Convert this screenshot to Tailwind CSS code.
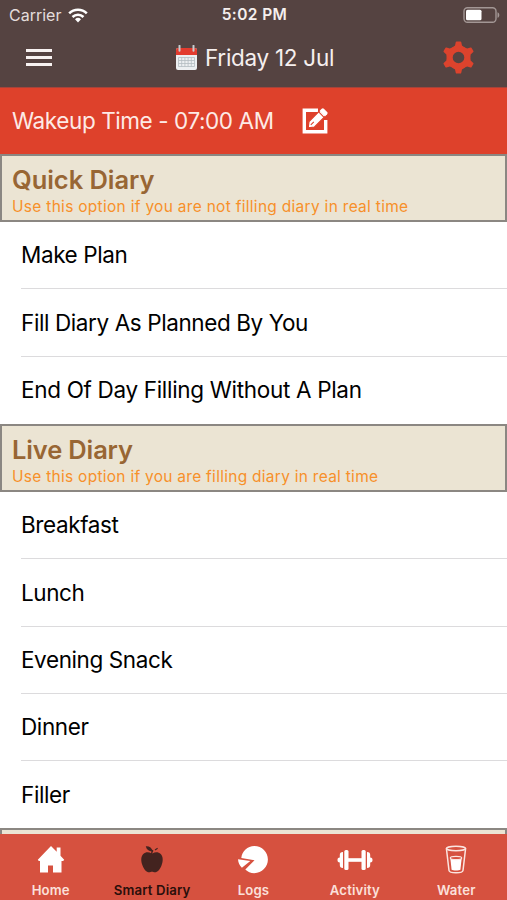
<!DOCTYPE html>
<html lang="en">
<head>
    <meta charset="UTF-8">
    <meta name="viewport" content="width=device-width, initial-scale=1.0">
    <title>Smart Diary</title>
    <script src="https://cdn.jsdelivr.net/npm/@tailwindcss/browser@4"></script>
</head>
<body class="bg-white font-[Inter,sans-serif] text-black">
    <div class="w-[507px] h-[900px] overflow-hidden flex flex-col relative">

        <!-- Header -->
        <header class="h-[88px] shrink-0 bg-[#554341] text-[#f5efee] border-b border-[#a5433a]">
            <div class="h-[30px] grid grid-cols-3 items-center pl-[9px] pr-[7px]">
                <div class="flex items-center gap-[7px]">
                    <span class="text-[16px] text-[#e4dddc]">Carrier</span>
                    <svg class="w-5 h-[15px]" viewBox="0 0 20 15" fill="none" stroke="#fff" stroke-width="2.6">
                        <path d="M1.2 5.4a12.6 12.6 0 0 1 17.6 0"/>
                        <path d="M4.5 9a7.9 7.9 0 0 1 11 0"/>
                        <path d="M10 14.4l-3-3.1a4.3 4.3 0 0 1 6 0z" fill="#fff" stroke="none"/>
                    </svg>
                </div>
                <span class="text-center text-[15.5px] font-semibold tracking-[0.4px]">5:02 PM</span>
                <svg class="justify-self-end w-[37px] h-4" viewBox="0 0 37 16">
                    <rect x="1" y=".7" width="32" height="14.6" rx="3.5" fill="none" stroke="#a39795" stroke-width="1.4"/>
                    <rect x="3" y="2.7" width="15.5" height="10.6" rx="1.5" fill="#fff"/>
                    <path d="M34.5 5.2c2.4.8 2.4 4.8 0 5.6z" fill="#a39795"/>
                </svg>
            </div>
            <div class="h-[55px] flex items-center pl-[26px] pr-[32px]">
                <div class="w-[26px] flex flex-col gap-[4px]">
                    <span class="h-[3px] bg-[#f8f2f1]"></span>
                    <span class="h-[3px] bg-[#f8f2f1]"></span>
                    <span class="h-[3px] bg-[#f8f2f1]"></span>
                </div>
                <div class="flex items-center gap-[7px] ml-[123px]">
                    <svg class="w-[23px] h-[26px]" viewBox="0 0 23 26">
                        <rect x="1" y="3" width="21" height="22" rx="2" fill="#eceff1"/>
                        <path d="M1 10V5a2 2 0 0 1 2-2h17a2 2 0 0 1 2 2v5z" fill="#e23b2e"/>
                        <path d="M4.500 .8v5M18.500 .8v5" stroke="#c9cdd0" stroke-width="2" stroke-linecap="round"/>
                        <path d="M3.500 12.500h16M3.500 15.500h16M3.500 18.500h16M3.500 21.500h16M3.500 12.500v9M6.700 12.500v9M9.900 12.500v9M13.100 12.500v9M16.300 12.500v9M19.500 12.500v9" stroke="#b4bcc1" stroke-width=".8"/>
                    </svg>
                    <span class="text-[22.5px] tracking-[-0.28px]">Friday 12 Jul</span>
                </div>
                <svg class="w-[33px] h-[33px] ml-auto" viewBox="0 0 33 33" fill="#dc432d">
                    <circle cx="16.5" cy="16.5" r="8.9" fill="none" stroke="#dc432d" stroke-width="6.2"/>
                    <path id="tooth" d="M10.500 7l2.500-2.500.8-3.500q.2-.6.800-.6h3.800q.6 0 .8.600l.8 3.500L22.500 7z"/>
                    <use href="#tooth" transform="rotate(60 16.5 16.5)"/>
                    <use href="#tooth" transform="rotate(120 16.5 16.5)"/>
                    <use href="#tooth" transform="rotate(180 16.5 16.5)"/>
                    <use href="#tooth" transform="rotate(240 16.5 16.5)"/>
                    <use href="#tooth" transform="rotate(300 16.5 16.5)"/>
                </svg>
            </div>
        </header>

        <!-- Wakeup time -->
        <div class="h-[66px] shrink-0 bg-[#de412b] text-[#fdeae6] flex items-center gap-[29px] pl-3">
            <span class="text-[22.5px] tracking-[-0.41px]">Wakeup Time - 07:00 AM</span>
            <svg class="w-[26px] h-[26px] -ml-px" viewBox="0 0 26 26">
                <path d="M16 2.300H2.300v21.400h21.400V12" fill="none" stroke="#fff" stroke-width="3.400"/>
                <path d="M6.200 19.800l.8-6.300L18.300 2.200l5.500 5.500L12.500 19z" fill="#fff" stroke="#de412b" stroke-width="1.200"/>
                <path d="M17.700 2.800l2-2q1.100-1 2.200 0l3.200 3.200q1 1.100 0 2.200l-2 2z" fill="#fff"/>
                <path d="M8.800 16.800l3-3M16.700 3.900l5.400 5.400" stroke="#de412b" stroke-width="1.100"/>
            </svg>
        </div>

        <!-- Quick diary -->
        <div class="h-[68px] shrink-0 bg-[#ebe4d3] border-2 border-[#8b8782] pl-[10px] pt-[8px]">
            <h2 class="text-[25.5px] leading-[32px] font-semibold tracking-[-0.05px] text-[#986634]">Quick Diary</h2>
            <p class="text-[15.5px] leading-[19px] tracking-[0.29px] pt-px text-[#f7902a]">Use this option if you are not filling diary in real time</p>
        </div>
        <ul class="shrink-0 text-[22.5px] tracking-[-0.4px] pl-[21px]">
            <li class="h-[67.4px] flex items-center border-b border-[#dcdbdd]">Make Plan</li>
            <li class="h-[67.4px] flex items-center border-b border-[#dcdbdd]">Fill Diary As Planned By You</li>
            <li class="h-[67.2px] flex items-center pb-px tracking-[-0.32px]">End Of Day Filling Without A Plan</li>
        </ul>

        <!-- Live diary -->
        <div class="h-[68px] shrink-0 bg-[#ebe4d3] border-2 border-[#8b8782] pl-[10px] pt-[8px]">
            <h2 class="text-[25.5px] leading-[32px] font-semibold tracking-[-0.15px] text-[#986634]">Live Diary</h2>
            <p class="text-[15.5px] leading-[19px] tracking-[0.27px] pt-px text-[#f7902a]">Use this option if you are filling diary in real time</p>
        </div>
        <ul class="shrink-0 text-[22.5px] tracking-[-0.4px] pl-[21px]">
            <li class="h-[67.3px] flex items-center border-b border-[#dcdbdd]">Breakfast</li>
            <li class="h-[67.3px] flex items-center border-b border-[#dcdbdd]">Lunch</li>
            <li class="h-[67.3px] flex items-center border-b border-[#dcdbdd]">Evening Snack</li>
            <li class="h-[67.3px] flex items-center border-b border-[#dcdbdd]">Dinner</li>
            <li class="h-[67.2px] flex items-center">Filler</li>
        </ul>
        <div class="h-[68px] shrink-0 bg-[#ebe4d3] border-2 border-[#8b8782]"></div>

        <!-- Tab bar -->
        <nav class="absolute bottom-0 inset-x-0 h-[66px] bg-[#d6513f] grid grid-cols-5 text-[13.2px] font-semibold tracking-[0.15px] text-[#fbe0da]">
            <a class="flex flex-col items-center pt-[11px]">
                <svg class="w-[28px] h-[29px]" viewBox="0 0 28 29" fill="#fff">
                    <path d="M14 1L.8 14.800l1 1.200h1.200v11.500h8v-7h5v7h8.500V16h1.700l1-1.200-3.700-4V2.500h-3.800v4.300z"/>
                </svg>
                <span class="mt-[8px] leading-[17px]">Home</span>
            </a>
            <a class="flex flex-col items-center pt-[11px] text-[#2a0f0b]">
                <svg class="w-[24px] h-[29px]" viewBox="0 0 24 29" fill="#43231f">
                    <path d="M12.500 8.500c2.500-1.700 6-1.600 8.200.5 2.500 2.500 2.600 7 .8 11.500-1.600 4-4 6.800-6.600 6.800-1.300 0-1.700-.5-2.900-.5s-1.600.5-2.900.500c-2.600 0-5-2.800-6.600-6.800C.7 16 .8 11.500 3.300 9c2.200-2.100 5.700-2.200 8.200-.5z"/>
                    <path d="M11.600 9c.1-1.600.5-2.700 1.300-3.700" fill="none" stroke="#43231f" stroke-width="1.400"/>
                    <path d="M5.800 1.300c3.400-.3 6.300 1.700 6.900 5.100-3.500.3-6.200-1.600-6.900-5.100z"/>
                    <path d="M15 4.900l2.600-1.600" stroke="#43231f" stroke-width="1.200"/>
                </svg>
                <span class="mt-[8px] leading-[17px]">Smart Diary</span>
            </a>
            <a class="flex flex-col items-center pt-[11px]">
                <svg class="w-[32px] h-[29px]" viewBox="0 0 32 29" fill="#fff">
                    <path d="M17.500 15.200L4.300 13C5 6 10.500 1 17.300 1c7.700 0 13.600 6.100 13.600 13.600s-6 13.600-13.600 13.600c-3.600 0-6.600-1.200-9-3.600z"/>
                    <path d="M13.300 15.900L1 14.200c.2 3.300 1.600 6.300 3.900 8.500z"/>
                </svg>
                <span class="mt-[8px] leading-[17px]">Logs</span>
            </a>
            <a class="flex flex-col items-center pt-[11px]">
                <svg class="w-[36px] h-[29px]" viewBox="0 0 36 29" fill="#fff">
                    <rect x="7.300" y="5" width="4.200" height="20" rx="1.500"/>
                    <rect x="24.500" y="5" width="4.200" height="20" rx="1.500"/>
                    <rect x="11" y="13.200" width="14" height="3.600"/>
                    <path d="M6 7v16c-2.300 0-3.200-1-3.200-3v-2.500C1 17.200.500 16.500.500 15s.5-2.200 2.300-2.500V10C2.800 8 3.700 7 6 7z"/>
                    <path d="M30 7v16c2.300 0 3.200-1 3.200-3v-2.500c1.800-.3 2.300-1 2.300-2.500s-.5-2.200-2.300-2.500V10c0-2-.9-3-3.200-3z"/>
                </svg>
                <span class="mt-[8px] leading-[17px]">Activity</span>
            </a>
            <a class="flex flex-col items-center pt-[11px]">
                <svg class="w-[22px] h-[29px]" viewBox="0 0 22 29" fill="none" stroke="#fbe5e0" stroke-width="1.500">
                    <ellipse cx="11" cy="3.500" rx="9.600" ry="2.200"/>
                    <path d="M1.400 3.500L4 25.500c.2 1.300 3 2.200 7 2.200s6.800-.9 7-2.200l2.600-22"/>
                    <path d="M5.300 13l1.300 11.700c1.300 1.100 7.500 1.100 8.800 0L16.700 13z" fill="#fff" stroke="none"/>
                    <ellipse cx="11" cy="13" rx="5.700" ry="1.600" fill="#d6513f" stroke-width="1.200"/>
                </svg>
                <span class="mt-[8px] leading-[17px]">Water</span>
            </a>
        </nav>
    </div>
</body>
</html>
